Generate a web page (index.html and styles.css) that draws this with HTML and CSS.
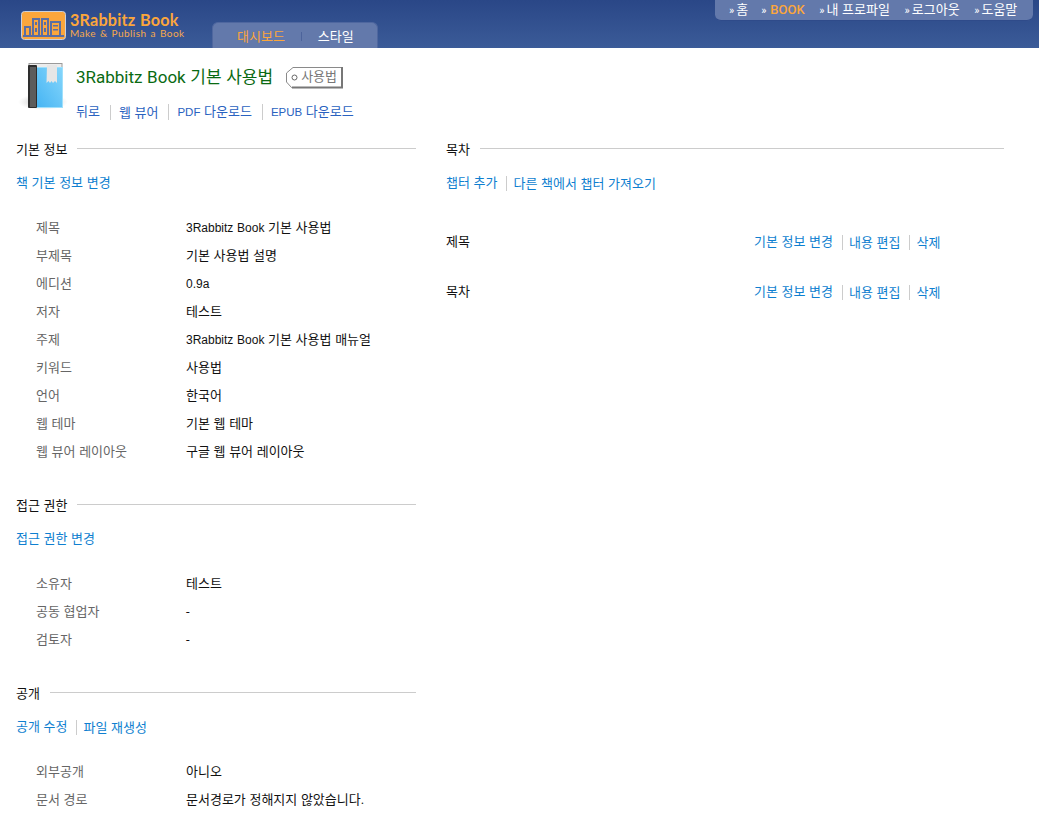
FILE: index.html
```html
<!DOCTYPE html>
<html lang="ko">
<head>
<meta charset="utf-8">
<title>3Rabbitz Book</title>
<link rel="stylesheet" href="styles.css">
</head>
<body>
<header class="topbar">
  <div class="brand">
    <svg class="logo" width="45" height="29" viewBox="0 0 45 29">
      <rect x="0.5" y="0.5" width="44" height="28" rx="3" fill="#fba63c" stroke="#c9cfdc"/>
      <g fill="none" stroke="#5a6ea3" stroke-width="2">
        <path d="M4 24v-8h5v8M2 25h41"/>
        <path d="M12 24V8h6v16M21 24V8h6v16M30 24V11h9v13"/>
      </g>
      <g fill="#5a6ea3">
        <rect x="14" y="11" width="2" height="3"/><rect x="14" y="17" width="2" height="4"/>
        <rect x="23" y="11" width="2" height="3"/><rect x="23" y="17" width="2" height="4"/>
        <rect x="32" y="14" width="5" height="1.5"/><rect x="32" y="18" width="5" height="1.5"/>
      </g>
    </svg>
    <div class="brand-text">
      <div class="brand-name">3Rabbitz Book</div>
      <div class="brand-tag">Make &amp; Publish a Book</div>
    </div>
  </div>
  <nav class="tabs">
    <a class="tab tab-active">대시보드</a>
    <span class="tab-sep"></span>
    <a class="tab">스타일</a>
  </nav>
  <nav class="usernav">
    <a><i>»</i>홈</a>
    <a class="nav-active"><i>»</i>BOOK</a>
    <a><i>»</i>내 프로파일</a>
    <a><i>»</i>로그아웃</a>
    <a><i>»</i>도움말</a>
  </nav>
</header>

<section class="bookhead">
  <svg class="bookicon" width="50" height="52" viewBox="0 0 50 52">
    <defs>
      <linearGradient id="cover" x1="1" y1="0" x2="0" y2="1"><stop offset="0" stop-color="#86d6fb"/><stop offset="1" stop-color="#45b4f3"/></linearGradient>
      <radialGradient id="shadow"><stop offset="0" stop-color="#8f8f8f" stop-opacity=".75"/><stop offset="1" stop-color="#bbb" stop-opacity="0"/></radialGradient>
    </defs>
    <ellipse cx="25" cy="42" rx="25" ry="8" fill="url(#shadow)"/>
    <rect x="11" y="3.5" width="33" height="5" fill="#ececec" stroke="#9a9a9a"/>
    <rect x="18.5" y="7.5" width="26" height="40" fill="url(#cover)" stroke="#9fe0fc"/>
    <rect x="10" y="5" width="9" height="43" rx="1" fill="#2e2e2e"/>
    <rect x="12" y="7" width="6" height="40" fill="#5c5c5c"/>
    <path d="M29 5h10v18l-2-2-2 2-1.500-2-1.500 2-1.500-2-2 2z" fill="#e6e6e6"/>
  </svg>
  <div class="bookhead-main">
    <div class="booktitle-row">
      <h1 class="booktitle">3Rabbitz Book 기본 사용법</h1>
      <span class="tag">
        <svg class="tag-shape" width="58" height="23" viewBox="0 0 58 23">
          <path d="M57 1.500H8L1.500 7v9l5 5.500H57" fill="#fff" stroke="#8a8a8a"/>
          <path d="M57 1v21.500M7 21.500h50" fill="none" stroke="#777" stroke-width="2"/>
          <circle cx="9.500" cy="11.500" r="2.500" fill="#fff" stroke="#666"/>
        </svg>
        <span class="tag-text">사용법</span>
      </span>
    </div>
    <div class="links book-links">
      <a>뒤로</a><a>웹 뷰어</a><a><span class="en">PDF</span> 다운로드</a><a><span class="en">EPUB</span> 다운로드</a>
    </div>
  </div>
</section>

<main class="columns">
  <div class="col-left">
    <section class="block">
      <h2 class="sec-title"><span>기본 정보</span></h2>
      <div class="links sec-links"><a>책 기본 정보 변경</a></div>
      <dl class="info">
        <div><dt>제목</dt><dd><span class="en">3Rabbitz Book</span> 기본 사용법</dd></div>
        <div><dt>부제목</dt><dd>기본 사용법 설명</dd></div>
        <div><dt>에디션</dt><dd><span class="en">0.9a</span></dd></div>
        <div><dt>저자</dt><dd>테스트</dd></div>
        <div><dt>주제</dt><dd><span class="en">3Rabbitz Book</span> 기본 사용법 매뉴얼</dd></div>
        <div><dt>키워드</dt><dd>사용법</dd></div>
        <div><dt>언어</dt><dd>한국어</dd></div>
        <div><dt>웹 테마</dt><dd>기본 웹 테마</dd></div>
        <div><dt>웹 뷰어 레이아웃</dt><dd>구글 웹 뷰어 레이아웃</dd></div>
      </dl>
    </section>
    <section class="block">
      <h2 class="sec-title"><span>접근 권한</span></h2>
      <div class="links sec-links"><a>접근 권한 변경</a></div>
      <dl class="info">
        <div><dt>소유자</dt><dd>테스트</dd></div>
        <div><dt>공동 협업자</dt><dd>-</dd></div>
        <div><dt>검토자</dt><dd>-</dd></div>
      </dl>
    </section>
    <section class="block">
      <h2 class="sec-title"><span>공개</span></h2>
      <div class="links sec-links"><a>공개 수정</a><a>파일 재생성</a></div>
      <dl class="info">
        <div><dt>외부공개</dt><dd>아니오</dd></div>
        <div><dt>문서 경로</dt><dd>문서경로가 정해지지 않았습니다.</dd></div>
      </dl>
    </section>
  </div>
  <div class="col-right">
    <h2 class="sec-title"><span>목차</span></h2>
    <div class="links sec-links"><a>챕터 추가</a><a>다른 책에서 챕터 가져오기</a></div>
    <div class="toc">
      <div class="toc-row"><span class="toc-name">제목</span><div class="links"><a>기본 정보 변경</a><a>내용 편집</a><a>삭제</a></div></div>
      <div class="toc-row"><span class="toc-name">목차</span><div class="links"><a>기본 정보 변경</a><a>내용 편집</a><a>삭제</a></div></div>
    </div>
  </div>
</main>
</body>
</html>
```
FILE: styles.css
```css
* { box-sizing: border-box; }
html, body { margin: 0; padding: 0; background: #fff; }
body {
  font-family: "Roboto", "Noto Sans CJK KR", sans-serif;
  font-size: 13px;
  word-spacing: .4px;
  line-height: 16px;
  color: #111;
  overflow: hidden;
}
a { cursor: pointer; }
.en { font-family: "Liberation Sans", sans-serif; font-size: 12px; }

/* header */
.topbar {
  position: relative;
  height: 48px;
  display: flex;
  align-items: flex-end;
  padding-left: 21px;
  background: linear-gradient(#2a4787, #3b5b98);
}
.brand { display: flex; align-items: center; gap: 4px; align-self: flex-start; margin-top: 11px; width: 191px; }
.logo { display: block; flex: none; }
.brand-name { font-family: "Lato", sans-serif; font-weight: 700; font-size: 16.200px; line-height: 17px; color: #fba63c; letter-spacing: .2px; white-space: nowrap; margin-top: -1px; }
.brand-tag { font-family: "Lato", sans-serif; font-size: 10px; line-height: 11px; color: #f6aa4c; letter-spacing: .45px; word-spacing: 1px; white-space: nowrap; }
.tabs {
  width: 166px; height: 26px;
  display: flex; align-items: center;
  padding: 2px 0 0 24px;
  background: #6379ab;
  border-radius: 6px 6px 0 0;
  border: 1px solid #4f679f;
  border-bottom: 0;
}
.tab { color: #fff; white-space: nowrap; }
.tab-active { color: #fba63c; }
.tab-sep { width: 1px; height: 9px; background: #4c639b; margin: 0 16px; }
.usernav {
  position: absolute; right: 6px; top: 0;
  width: 318px; height: 21px;
  display: flex; align-items: center;
  padding: 1px 0 0 14px;
  background: #6379ab;
  border-radius: 0 0 6px 6px;
  border-bottom: 1px solid #2f4b8a;
  color: #fff;
}
.usernav a { white-space: nowrap; margin-right: 14.700px; }
.usernav a:first-child { margin-right: 13px; }
.usernav i { font-style: normal; font-size: 11px; margin-right: 2px; }
.usernav .nav-active { color: #fba63c; font-weight: 500; }
.usernav .nav-active i { color: #fff; font-weight: 400; margin-right: 4px; }

/* book head */
.bookhead { display: flex; padding: 12px 0 0 18px; height: 92px; }
.bookicon { display: block; flex: none; margin-right: 8px; }
.booktitle-row { display: flex; align-items: center; margin-top: 7px; height: 20px; }
.booktitle { margin: 0; font-size: 17px; font-weight: 400; line-height: 20px; color: #0a6a12; white-space: nowrap; }
.tag {
  position: relative;
  display: block;
  width: 58px; height: 23px;
  margin-left: 12px;
  color: #777;
}
.tag-shape { position: absolute; left: 0; top: 0; display: block; }
.tag-text { position: absolute; left: 16px; top: 3px; white-space: nowrap; }
.links { display: flex; align-items: center; }
.links a { color: #0f7fd0; white-space: nowrap; }
.links a + a { margin-left: 9px; padding-left: 6px; border-left: 1px solid #ccc; line-height: 15px; }
.book-links { margin-top: 17px; }
.book-links a { color: #2a62c0; }
.book-links a + a { margin-left: 10px; padding-left: 8px; }
.book-links .en { font-size: 11.500px; }

/* columns */
.columns { display: flex; padding-left: 16px; }
.col-left { width: 400px; flex: none; }
.col-right { width: 558px; flex: none; margin-left: 30px; }
.sec-title {
  display: flex; align-items: center;
  margin: 0; height: 18px;
  font-size: 13px; font-weight: 400; color: #111;
}
.sec-title span { white-space: nowrap; margin-right: 10px; padding-top: 2px; }
.sec-title::after { content: ""; flex: 1; height: 1px; background: #ccc; margin-top: -1px; }
.sec-links { margin-top: 17px; height: 16px; }
.info { margin: 23px 0 0 20px; }
.info div { display: flex; height: 28px; align-items: center; }
.info dt { width: 150px; color: #666; }
.info dd { margin: 0; color: #111; }
.block + .block { margin-top: 30px; }
.toc { margin-top: 26px; width: 494px; }
.toc-row { display: flex; justify-content: space-between; align-items: center; height: 50px; }
.toc-name { color: #111; }
.toc-row .links { width: 186px; }
```
